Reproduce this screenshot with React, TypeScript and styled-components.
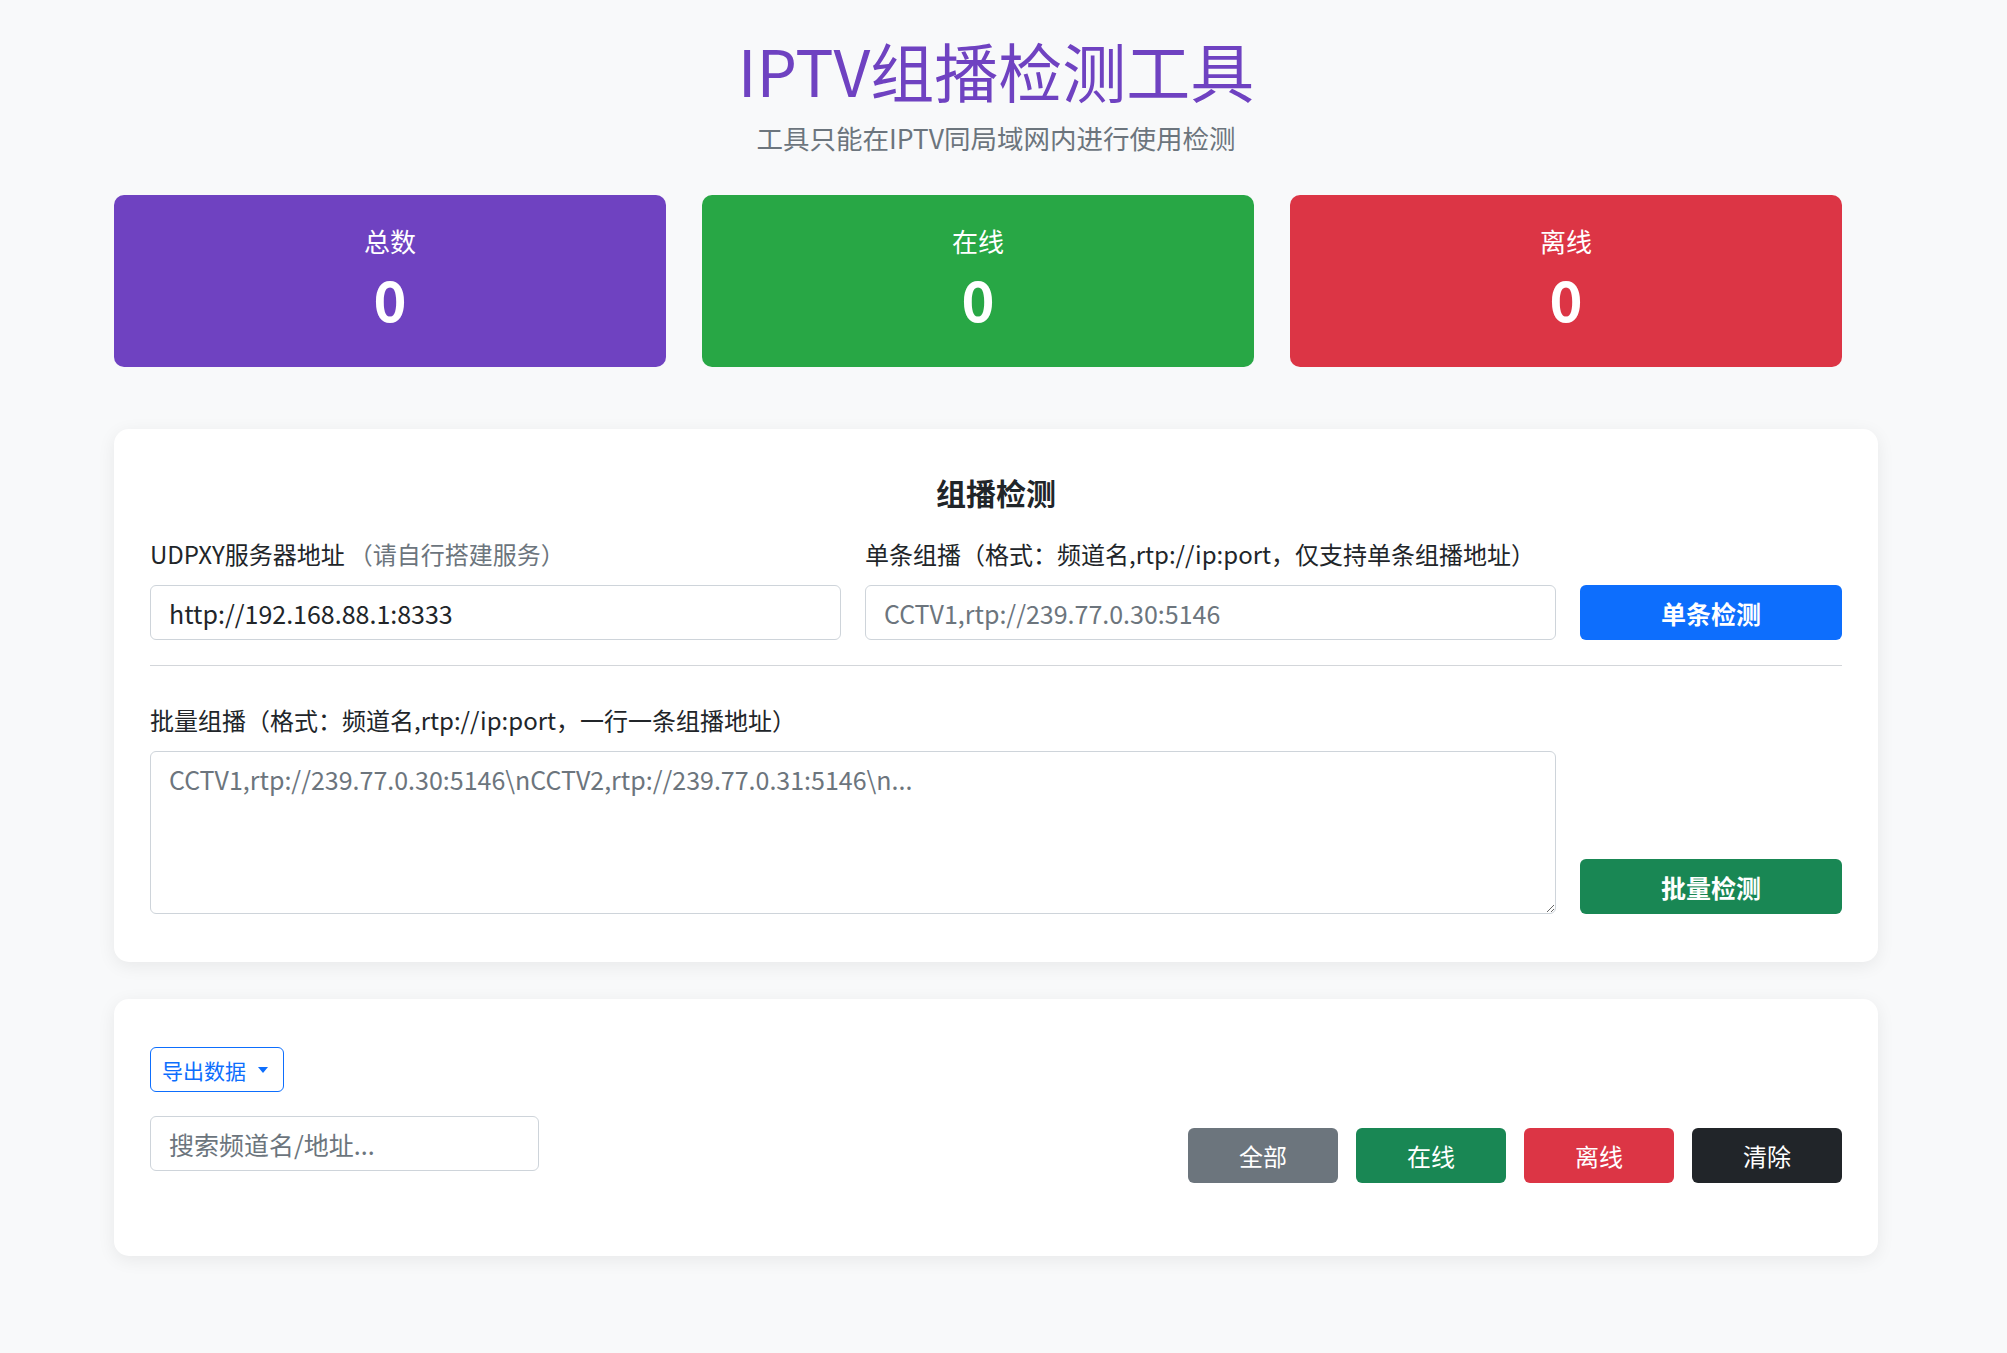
import React from 'react'
import styled, { createGlobalStyle } from 'styled-components'

const GlobalStyle = createGlobalStyle`
  * {
    box-sizing: border-box;
  }
  body {
    margin: 0;
    background: #f8f9fa;
    color: #212529;
    font-family: "Noto Sans CJK SC", "Noto Sans", sans-serif;
  }
`

const Page = styled.div`
  padding: 0 15px 80px 0;
`

const Container = styled.div`
  width: 1764px;
  margin: 0 auto;
`

const Header = styled.header`
  text-align: center;
  padding-top: 31px;
`

const Title = styled.h1`
  margin: 0;
  font-size: 64px;
  font-weight: 400;
  line-height: 77px;
  color: #6f42c1;
`

const Subtitle = styled.p`
  margin: 9px 0 0;
  font-size: 26.5px;
  line-height: 42px;
  color: #6c757d;
`

const StatRow = styled.div`
  display: grid;
  grid-template-columns: repeat(3, 1fr);
  gap: 36px;
  padding-right: 36px;
  margin-top: 36px;
`

const StatCard = styled.div<{ $bg: string }>`
  height: 172px;
  border-radius: 10px;
  background: ${(p) => p.$bg};
  color: #fff;
  display: flex;
  flex-direction: column;
  align-items: center;
  padding-top: 26px;
`

const StatLabel = styled.div`
  font-size: 26px;
  line-height: 39px;
`

const StatValue = styled.div`
  margin-top: 3px;
  font-size: 56px;
  font-weight: 700;
  line-height: 70px;
`

const Card = styled.section<{ $bottom?: number }>`
  background: #fff;
  border-radius: 15px;
  box-shadow: 0 4px 18px rgba(0, 0, 0, 0.07);
  padding: 48px 36px ${(p) => p.$bottom ?? 48}px;
  margin-top: ${(p) => (p.$bottom ? 37 : 62)}px;
`

const CardTitle = styled.h2`
  margin: -3px 0 26px;
  text-align: center;
  font-size: 30px;
  font-weight: 700;
  line-height: 36px;
`

const FieldRow = styled.div`
  display: grid;
  grid-template-columns: 691px 691px 262px;
  gap: 24px;
  align-items: end;
`

const BatchRow = styled.div`
  display: grid;
  grid-template-columns: 1406px 262px;
  gap: 24px;
  align-items: end;
`

const Field = styled.div`
  display: flex;
  flex-direction: column;
`

const Label = styled.label`
  font-size: 24px;
  line-height: 36px;
  margin-bottom: 13px;
  white-space: nowrap;
`

const Hint = styled.span`
  color: #6c757d;
  margin-left: 4px;
`

const Input = styled.input<{ $width?: number }>`
  height: 55px;
  width: ${(p) => (p.$width ? `${p.$width}px` : '100%')};
  border: 1px solid #ced4da;
  border-radius: 6px;
  padding: 0 18px;
  font-family: inherit;
  font-size: 25px;
  color: #212529;
  background: #fff;
  outline: none;
  &::placeholder {
    color: #6c757d;
  }
`

const TextArea = styled.textarea`
  height: 163px;
  width: 100%;
  border: 1px solid #ced4da;
  border-radius: 6px;
  padding: 9px 18px;
  font-family: inherit;
  font-size: 25px;
  line-height: 36px;
  color: #212529;
  outline: none;
  display: block;
  &::placeholder {
    color: #6c757d;
  }
`

const ActionButton = styled.button<{ $bg: string; $bold?: boolean }>`
  height: 55px;
  border: none;
  border-radius: 6px;
  background: ${(p) => p.$bg};
  color: #fff;
  font-family: inherit;
  font-size: ${(p) => (p.$bold ? 25 : 24)}px;
  font-weight: ${(p) => (p.$bold ? 700 : 400)};
  cursor: pointer;
`

const Divider = styled.hr`
  border: none;
  border-top: 1px solid #d3d6da;
  margin: 25px 0 36px;
`

const ToolRow = styled.div`
  display: flex;
  justify-content: space-between;
  align-items: flex-end;
`

const LeftTools = styled.div`
  display: flex;
  flex-direction: column;
  align-items: flex-start;
  gap: 24px;
  padding-bottom: 12px;
`

const DropdownButton = styled.button`
  height: 45px;
  display: flex;
  align-items: center;
  gap: 12px;
  padding: 0 15px 0 11px;
  border: 1px solid #0d6efd;
  border-radius: 6px;
  background: #fff;
  color: #0d6efd;
  font-family: inherit;
  font-size: 21px;
  cursor: pointer;
  &::after {
    content: '';
    border-top: 6px solid #0d6efd;
    border-left: 5px solid transparent;
    border-right: 5px solid transparent;
  }
`

const FilterGroup = styled.div`
  display: grid;
  grid-template-columns: repeat(4, 150px);
  gap: 18px;
`

export default function App() {
  return (
    <Page>
      <GlobalStyle />
      <Container>
        <Header>
          <Title>IPTV组播检测工具</Title>
          <Subtitle>工具只能在IPTV同局域网内进行使用检测</Subtitle>
        </Header>

        <StatRow>
          <StatCard $bg="#6f42c1">
            <StatLabel>总数</StatLabel>
            <StatValue>0</StatValue>
          </StatCard>
          <StatCard $bg="#28a745">
            <StatLabel>在线</StatLabel>
            <StatValue>0</StatValue>
          </StatCard>
          <StatCard $bg="#dc3545">
            <StatLabel>离线</StatLabel>
            <StatValue>0</StatValue>
          </StatCard>
        </StatRow>

        <Card>
          <CardTitle>组播检测</CardTitle>
          <FieldRow>
            <Field>
              <Label>
                UDPXY服务器地址<Hint>（请自行搭建服务）</Hint>
              </Label>
              <Input defaultValue="http://192.168.88.1:8333" />
            </Field>
            <Field>
              <Label>单条组播（格式：频道名,rtp://ip:port，仅支持单条组播地址）</Label>
              <Input placeholder="CCTV1,rtp://239.77.0.30:5146" />
            </Field>
            <ActionButton $bg="#0d6efd" $bold>
              单条检测
            </ActionButton>
          </FieldRow>

          <Divider />

          <BatchRow>
            <Field>
              <Label>批量组播（格式：频道名,rtp://ip:port，一行一条组播地址）</Label>
              <TextArea placeholder={'CCTV1,rtp://239.77.0.30:5146\\nCCTV2,rtp://239.77.0.31:5146\\n...'} />
            </Field>
            <ActionButton $bg="#198754" $bold>
              批量检测
            </ActionButton>
          </BatchRow>
        </Card>

        <Card $bottom={73}>
          <ToolRow>
            <LeftTools>
              <DropdownButton>导出数据</DropdownButton>
              <Input $width={389} placeholder="搜索频道名/地址..." />
            </LeftTools>
            <FilterGroup>
              <ActionButton $bg="#6c757d">全部</ActionButton>
              <ActionButton $bg="#198754">在线</ActionButton>
              <ActionButton $bg="#dc3545">离线</ActionButton>
              <ActionButton $bg="#212529">清除</ActionButton>
            </FilterGroup>
          </ToolRow>
        </Card>
      </Container>
    </Page>
  )
}
